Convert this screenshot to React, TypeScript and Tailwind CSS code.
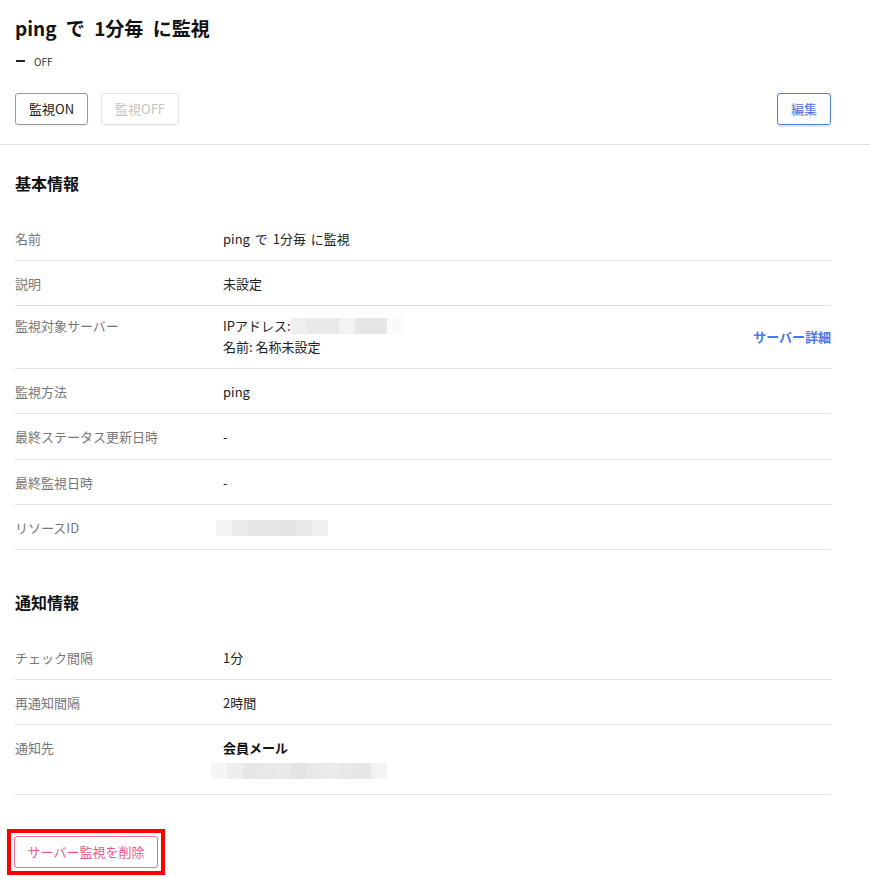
import React from "react";

// Pixelated placeholder standing in for masked values
const Masked = ({ shades, className = "" }: { shades: string[]; className?: string }) => (
    <div className={`flex h-4 ${className}`}>
        {shades.map((c, i) => (
            <div key={i} className="h-4 w-4" style={{ backgroundColor: c }} />
        ))}
    </div>
);

const Row = ({ label, children, className = "h-[45px] items-center" }: { label: string; children: React.ReactNode; className?: string }) => (
    <div className={`flex border-b border-[#e0e0e0] leading-[21px] ${className}`}>
        <div className="h-[21px] w-[208px] shrink-0 text-[#777]">{label}</div>
        <div className="flex-1 text-[#222]">{children}</div>
    </div>
);

export default function App() {
    return (
        <div
            className="min-h-screen bg-white text-[13px] text-[#222]"
            style={{ fontFamily: '"Noto Sans CJK JP", "Noto Sans", sans-serif' }}
        >
            {/* Header */}
            <div className="border-b border-[#e0e0e0] pl-[15px] pr-[39px] pt-[14px] pb-[19px]">
                <h1 className="h-[28px] text-[19px] font-bold leading-[28px] text-[#111] [word-spacing:5px]">ping で 1分毎 に監視</h1>
                <div className="mt-[11px] flex h-4 items-center">
                    <span className="ml-[1px] h-[2px] w-[9px] bg-[#222]" />
                    <span className="ml-[9px] text-[10px] text-[#333]">OFF</span>
                </div>
                <div className="mt-6 flex items-center">
                    <button className="h-8 rounded-[3px] border border-[#999] px-[13px] text-[13px] text-[#222] shadow-[0_1px_2px_rgba(0,0,0,0.08)]">
                        監視ON
                    </button>
                    <button className="ml-[13px] h-8 rounded-[3px] border border-[#e2e2e2] px-[13px] text-[13px] text-[#c4c4c4] shadow-[0_1px_2px_rgba(0,0,0,0.05)]">
                        監視OFF
                    </button>
                    <button className="ml-auto h-8 rounded-[3px] border border-[#4b7bec] px-[13px] text-[13px] text-[#4b70d9] shadow-[0_2px_0_rgba(75,123,236,0.15)]">
                        編集
                    </button>
                </div>
            </div>

            <div className="pl-[15px] pr-[39px]">
                {/* 基本情報 */}
                <h2 className="mt-[26px] h-[24px] text-[16px] font-bold leading-[24px] text-[#111]">基本情報</h2>
                <div className="mt-[21px]">
                    <Row label="名前"><span className="[word-spacing:2px]">ping で 1分毎 に監視</span></Row>
                    <Row label="説明">未設定</Row>
                    <div className="flex h-[63px] items-center border-b border-[#e0e0e0] pt-[9px] pb-[11px] leading-[21px]">
                        <div className="h-[21px] w-[208px] shrink-0 self-start text-[#777]">監視対象サーバー</div>
                        <div className="flex-1">
                            <div className="flex h-[21px] items-center">
                                <span>IPアドレス:</span>
                                <Masked shades={["#efefef", "#e9e9e9", "#e9e9e9", "#f3f3f3", "#e6e6e6", "#e6e6e6", "#fafafa"]} />
                            </div>
                            <div className="h-[21px]">名前: 名称未設定</div>
                        </div>
                        <a href="#" className="text-[13px] font-bold text-[#4a78f0]">サーバー詳細</a>
                    </div>
                    <Row label="監視方法">ping</Row>
                    <Row label="最終ステータス更新日時" className="h-[46px] items-center">-</Row>
                    <Row label="最終監視日時">-</Row>
                    <Row label="リソースID">
                        <Masked className="ml-[-7px] mt-[2px]" shades={["#f3f3f3", "#ebebeb", "#e7e7e7", "#e7e7e7", "#e4e4e4", "#e8e8e8", "#f0f0f0"]} />
                    </Row>
                </div>

                {/* 通知情報 */}
                <h2 className="mt-[40px] h-[24px] text-[16px] font-bold leading-[24px] text-[#111]">通知情報</h2>
                <div className="mt-[21px]">
                    <Row label="チェック間隔">1分</Row>
                    <Row label="再通知間隔">2時間</Row>
                    <Row label="通知先" className="h-[70px] items-start pt-3">
                        <div className="h-[21px] font-bold text-[#111]">会員メール</div>
                        <Masked
                            className="ml-[-12px] mt-[5px]"
                            shades={["#f5f5f5", "#eeeeee", "#e6e6e6", "#e8e8e8", "#ebe9e7", "#e2e4e3", "#e9e9e9", "#ebebeb", "#e8e8ea", "#e6e6e6", "#f3f3f3"]}
                        />
                    </Row>
                </div>

                {/* Delete */}
                <div className="mt-[34px] ml-[-8px] inline-block border-4 border-[#ff0000] p-[3px]">
                    <button className="h-8 w-[144px] rounded-[3px] border border-[#f06a96] text-[13px] text-[#ec5a8a]">
                        サーバー監視を削除
                    </button>
                </div>
            </div>
        </div>
    );
}
